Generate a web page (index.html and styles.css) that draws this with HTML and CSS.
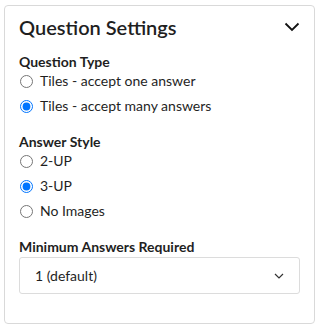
FILE: index.html
```
<!DOCTYPE html>
<html lang="en">
<head>
  <meta charset="UTF-8" />
  <meta name="viewport" content="width=device-width, initial-scale=1.0" />
  <title>Question Settings</title>
  <link rel="stylesheet" href="styles.css">
</head>
<body>
  <div class="panel">
    <div class="panel-header">
      <h2 class="panel-title">Question Settings</h2>
      <svg class="collapse" width="16" height="10" viewBox="0 0 16 10">
        <path d="M1.5 1.5 L8 8 L14.5 1.5" fill="none" stroke="#111" stroke-width="1.8" />
      </svg>
    </div>

    <div class="group">
      <div class="group-label">Question Type</div>
      <label class="option"><input type="radio" name="qtype"> Tiles - accept one answer</label>
      <label class="option"><input type="radio" name="qtype" checked> Tiles - accept many answers</label>
    </div>

    <div class="group">
      <div class="group-label">Answer Style</div>
      <label class="option"><input type="radio" name="astyle"> 2-UP</label>
      <label class="option"><input type="radio" name="astyle" checked> 3-UP</label>
      <label class="option"><input type="radio" name="astyle"> No Images</label>
    </div>

    <div class="group">
      <div class="group-label">Minimum Answers Required</div>
      <div class="select">
        <span>1 (default)</span>
        <svg width="10" height="6" viewBox="0 0 10 6">
          <path d="M1 1 L5 5 L9 1" fill="none" stroke="#333" stroke-width="1.2" />
        </svg>
      </div>
    </div>
  </div>
</body>
</html>
```
FILE: styles.css
```
body {
  margin: 0;
  padding: 5px 5px 6px 4px;
  font-family: Lato, "Liberation Sans", sans-serif;
  color: #1f1f1f;
  background: #fff;
}
.panel {
  height: 319px;
  box-sizing: border-box;
  border: 1px solid #d9d9d9;
  border-radius: 4px;
  padding: 9px 14px 0 14px;
}
.panel-header {
  display: flex;
  align-items: center;
  justify-content: space-between;
}
.panel-title {
  margin: 0;
  font-size: 20px;
  font-weight: 600;
  line-height: 24px;
}
.group {
  margin-top: 14px;
}
.group + .group {
  margin-top: 17px;
}
.group-label {
  font-size: 14px;
  font-weight: 700;
  line-height: 18px;
}
.option {
  display: flex;
  align-items: center;
  font-size: 14px;
  line-height: 20px;
}
.option + .option {
  margin-top: 5px;
}
.option input {
  margin: 0 7px 0 1px;
  width: 13px;
  height: 13px;
}
.select {
  margin-top: 1px;
  height: 37px;
  box-sizing: border-box;
  border: 1px solid #dcdcdc;
  border-radius: 3px;
  display: flex;
  align-items: center;
  justify-content: space-between;
  padding: 0 15px 0 15px;
  font-size: 14px;
}
```
